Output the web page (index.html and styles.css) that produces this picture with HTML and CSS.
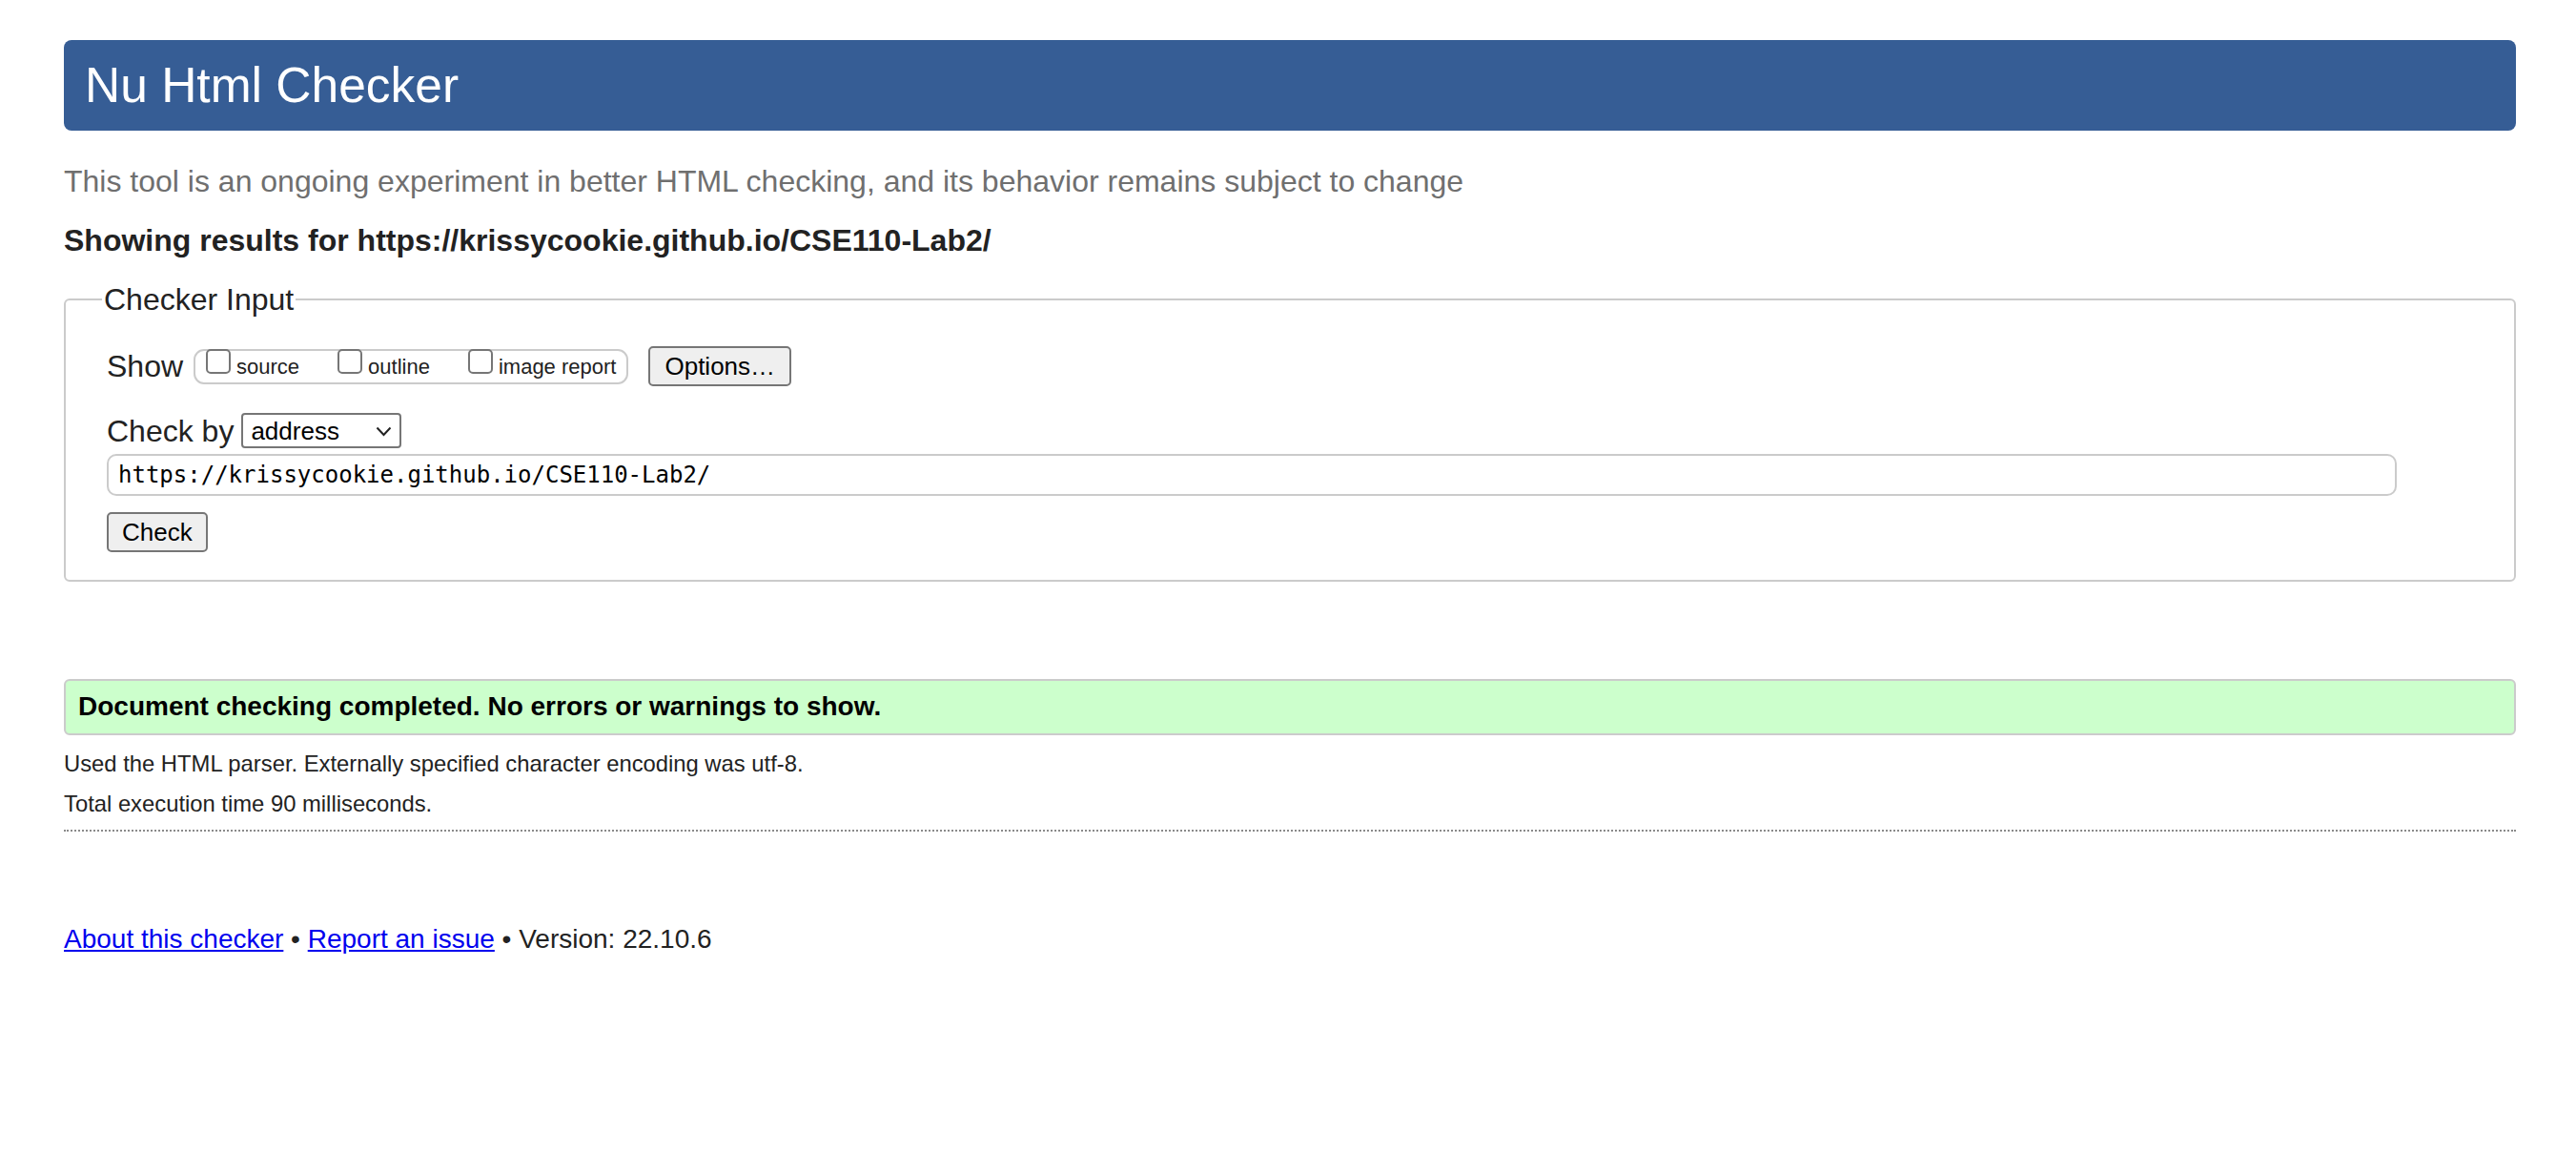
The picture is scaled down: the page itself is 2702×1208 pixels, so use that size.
FILE: index.html
```html
<!DOCTYPE html>
<html lang="en">
<head>
<meta charset="utf-8">
<title>Nu Html Checker</title>
<link rel="stylesheet" href="styles.css">
</head>
<body>
<h1 class="title">Nu Html Checker</h1>
<p class="lead">This tool is an ongoing experiment in better HTML checking, and its behavior remains subject to change</p>
<p class="showing">Showing results for https://krissycookie.github.io/CSE110-Lab2/</p>
<form class="checker-form">
  <fieldset class="input-box">
    <legend class="input-legend">Checker Input</legend>
    <div class="row show-row">
      <span class="row-label">Show</span>
      <span class="opts">
        <label class="opt"><input class="cb" type="checkbox"><span class="opt-text">source</span></label>
        <label class="opt"><input class="cb" type="checkbox"><span class="opt-text">outline</span></label>
        <label class="opt"><input class="cb" type="checkbox"><span class="opt-text">image report</span></label>
      </span>
      <button type="button" class="btn opts-btn">Options…</button>
    </div>
    <div class="row by-row">
      <label class="row-label by-label">Check by</label>
      <span class="select-wrap">
        <select class="select"><option>address</option></select>
        <svg class="chev" width="17" height="11" viewBox="0 0 17 11"><polyline points="1.5,1.5 8.5,9 15.5,1.5" fill="none" stroke="#222" stroke-width="2"/></svg>
      </span>
    </div>
    <input class="url" type="url" value="https://krissycookie.github.io/CSE110-Lab2/">
    <button type="button" class="btn check-btn">Check</button>
  </fieldset>
</form>
<div class="success">Document checking completed. No errors or warnings to show.</div>
<div class="details">
  <p class="detail">Used the HTML parser. Externally specified character encoding was utf-8.</p>
  <p class="detail">Total execution time 90 milliseconds.</p>
</div>
<p class="footer"><a href="#" class="flink">About this checker</a> • <a href="#" class="flink">Report an issue</a> • Version: 22.10.6</p>
</body>
</html>
```

FILE: styles.css
```css
html, body {
  background: #fff;
}
body {
  margin: 0;
  padding: 42px 63px 40px 67px;
  font-family: "Liberation Sans", Arial, sans-serif;
  color: #222;
  font-size: 28px;
}
.title {
  margin: 0;
  height: 95px;
  box-sizing: border-box;
  background: #365d95;
  color: #fff;
  font-weight: normal;
  font-size: 51.5px;
  line-height: 95px;
  padding-left: 22px;
  border-radius: 8px;
}
.lead {
  margin: 35px 0 0;
  font-size: 32px;
  line-height: 37px;
  color: #6f6f6f;
}
.showing {
  margin: 25px 0 0;
  font-size: 32px;
  line-height: 37px;
  font-weight: bold;
  color: #222;
}
.checker-form {
  margin: 25px 0 0;
}
.input-box {
  margin: 0;
  border: 2px solid #cbcbcb;
  border-radius: 6px;
  padding: 31px 43px 29px 43px;
  min-width: 0;
}
.input-legend {
  font-size: 32px;
  line-height: 36px;
  padding: 0 2px;
  margin-left: -5px;
  color: #222;
}
.row {
  display: flex;
  align-items: center;
}
.show-row {
  height: 42px;
}
.row-label {
  font-size: 32px;
  line-height: 36px;
  color: #222;
}
.opts {
  display: flex;
  align-items: center;
  box-sizing: border-box;
  height: 37px;
  margin-left: 11px;
  padding: 0 11px;
  border: 2px solid #cbcbcb;
  border-radius: 11px;
}
.opt {
  display: flex;
  align-items: center;
  margin-right: 40px;
}
.opt:last-child {
  margin-right: 0;
}
.cb {
  appearance: none;
  -webkit-appearance: none;
  margin: 0 6px 10px 0;
  width: 26px;
  height: 26px;
  box-sizing: border-box;
  border: 2px solid #767676;
  border-radius: 5px;
  background: #fff;
}
.opt-text {
  font-size: 22px;
  line-height: 25px;
  color: #222;
}
.btn {
  font-family: "Liberation Sans", Arial, sans-serif;
  font-size: 26px;
  color: #000;
  background: #efefef;
  border: 2px solid #767676;
  border-radius: 5px;
  height: 42px;
  box-sizing: border-box;
  padding: 0 15px;
  line-height: 36px;
}
.opts-btn {
  margin-left: 21px;
}
.by-row {
  margin-top: 28px;
  height: 37px;
}
.by-label {
  margin-right: 8px;
}
.select-wrap {
  position: relative;
  display: block;
  width: 168px;
  height: 37px;
}
.select {
  appearance: none;
  -webkit-appearance: none;
  width: 168px;
  height: 37px;
  box-sizing: border-box;
  border: 2px solid #767676;
  border-radius: 4px;
  background: #fff;
  font-family: "Liberation Sans", Arial, sans-serif;
  font-size: 26px;
  color: #000;
  padding: 0 0 0 8px;
  margin: 0;
}
.chev {
  position: absolute;
  right: 10px;
  top: 14px;
  pointer-events: none;
}
.url {
  display: block;
  margin-top: 6px;
  width: calc(100% - 80px);
  height: 44px;
  box-sizing: border-box;
  border: 2px solid #cbcbcb;
  border-radius: 10px;
  padding: 0 10px;
  font-family: "DejaVu Sans Mono", "Liberation Mono", monospace;
  font-size: 24px;
  color: #000;
  background: #fff;
}
.check-btn {
  display: block;
  margin-top: 17px;
  padding: 0 14px;
}
.success {
  margin-top: 102px;
  box-sizing: border-box;
  height: 59px;
  background: #ccffcc;
  border: 2px solid #cbcbcb;
  border-radius: 6px;
  padding: 10px 13px 12px;
  font-weight: bold;
  font-size: 28px;
  line-height: 33px;
  color: #000;
}
.details {
  margin-top: 9px;
  padding-bottom: 6px;
  border-bottom: 2px dotted #8a8a8a;
}
.detail {
  margin: 0;
  font-size: 23.8px;
  line-height: 42px;
  color: #222;
}
.footer {
  margin: 97px 0 0;
  font-size: 28px;
  line-height: 32px;
  color: #222;
}
.flink {
  color: #0000ee;
  text-decoration: underline;
}
```
